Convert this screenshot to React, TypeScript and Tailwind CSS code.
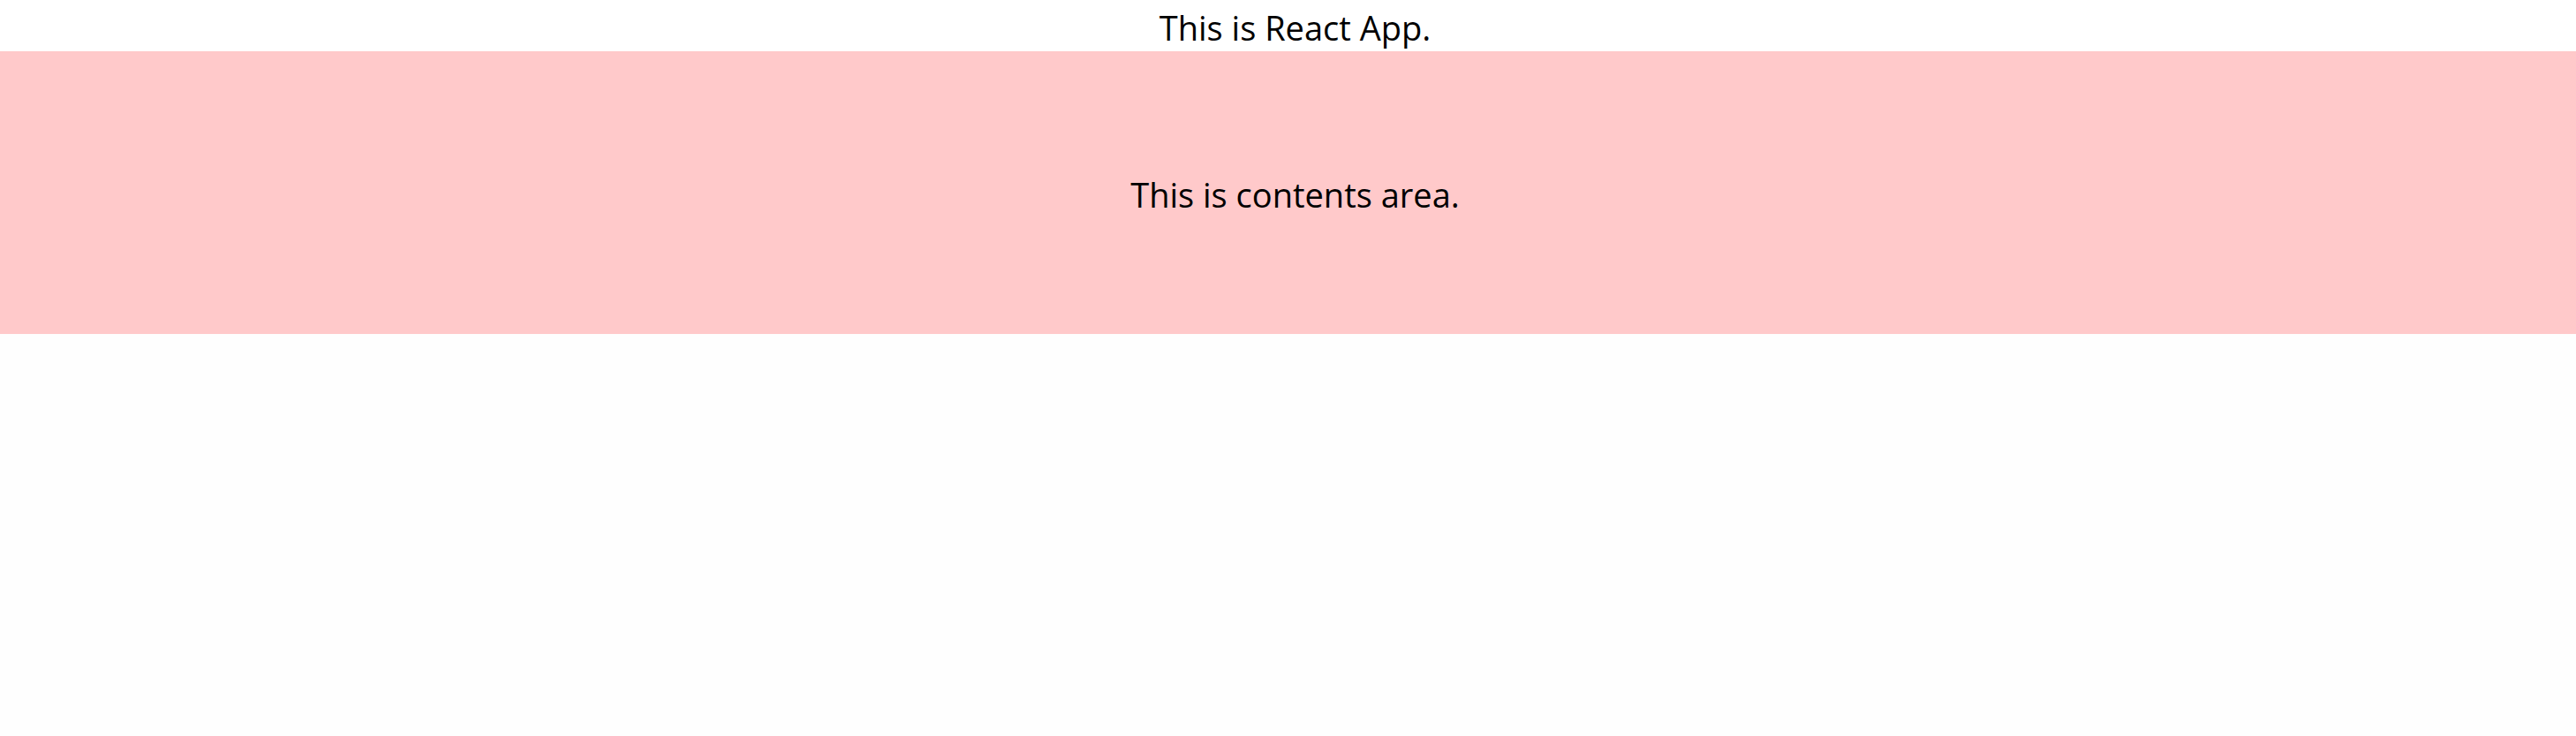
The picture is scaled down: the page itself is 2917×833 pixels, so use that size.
import React from 'react'

const App = () => {
  return (
    <div className="min-h-screen bg-[#fefefe] text-black" style={{ fontFamily: '"Open Sans", "Noto Sans", sans-serif' }}>
      {/* header */}
      <header className="h-[58px] bg-white flex items-center justify-center pl-[16px]">
        <h1 className="text-[38px] leading-none font-normal pt-[4px]">This is React App.</h1>
      </header>

      {/* contents */}
      <main className="h-[320px] bg-[#ffc9ca] flex items-center justify-center pl-[16px]">
        <p className="text-[38px] leading-none pt-[4px]">This is contents area.</p>
      </main>
    </div>
  )
}

export default App
